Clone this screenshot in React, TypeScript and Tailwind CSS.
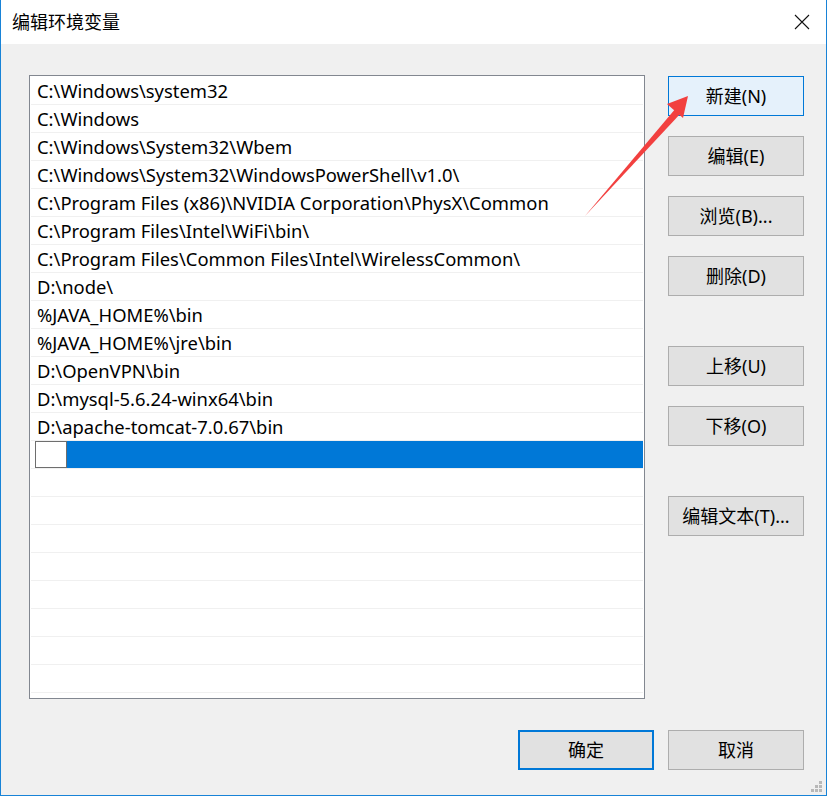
import React from "react";

const paths = [
  "C:\\Windows\\system32",
  "C:\\Windows",
  "C:\\Windows\\System32\\Wbem",
  "C:\\Windows\\System32\\WindowsPowerShell\\v1.0\\",
  "C:\\Program Files (x86)\\NVIDIA Corporation\\PhysX\\Common",
  "C:\\Program Files\\Intel\\WiFi\\bin\\",
  "C:\\Program Files\\Common Files\\Intel\\WirelessCommon\\",
  "D:\\node\\",
  "%JAVA_HOME%\\bin",
  "%JAVA_HOME%\\jre\\bin",
  "D:\\OpenVPN\\bin",
  "D:\\mysql-5.6.24-winx64\\bin",
  "D:\\apache-tomcat-7.0.67\\bin",
];

const font = "font-['Noto_Sans','Noto_Sans_CJK_SC',sans-serif]";

function Btn({
  label,
  className = "",
}: {
  label: string;
  className?: string;
}) {
  return (
    <div
      className={`h-[40px] w-[136px] flex items-center justify-center text-[18px] text-black border border-[#adadad] bg-[#e1e1e1] ${className}`}
    >
      {label}
    </div>
  );
}

export default function App() {
  return (
    <div
      className={`relative w-[827px] h-[796px] bg-[#f0f0f0] border-x border-b border-[#1883d7] ${font} overflow-hidden`}
    >
      {/* title bar */}
      <div className="h-[44px] bg-white flex items-center justify-between pl-[11px] pr-[16px]">
        <span className="text-[18px] text-black leading-none">编辑环境变量</span>
        <svg width="16" height="16" viewBox="0 0 16 16">
          <path d="M1 1 L15 15 M15 1 L1 15" stroke="#111" strokeWidth="1.1" />
        </svg>
      </div>

      <div className="flex pl-[28px] pt-[31px]">
        {/* list */}
        <div className="w-[616px] h-[624px] bg-white border border-[#828790] pt-px px-px overflow-hidden">
          {paths.map((p) => (
            <div
              key={p}
              className="h-[28px] border-b border-[#f0f0f0] flex items-center pl-[6px] pt-[2px] text-[18.4px] text-black leading-none whitespace-nowrap"
            >
              {p}
            </div>
          ))}
          <div className="h-[28px] border-b border-[#f0f0f0] flex pl-[4px]">
            <div className="w-[32px] h-[27px] bg-white border border-[#6e6e6e]" />
            <div className="flex-1 h-[27px] bg-[#0078d7]" />
          </div>
          {Array.from({ length: 9 }).map((_, i) => (
            <div key={i} className="h-[28px] border-b border-[#f0f0f0]" />
          ))}
        </div>

        {/* side buttons */}
        <div className="ml-[23px] pt-px flex flex-col">
          <Btn label="新建(N)" className="!bg-[#e5f1fb] !border-[#0078d7]" />
          <Btn label="编辑(E)" className="mt-[20px]" />
          <Btn label="浏览(B)..." className="mt-[20px]" />
          <Btn label="删除(D)" className="mt-[20px]" />
          <Btn label="上移(U)" className="mt-[50px]" />
          <Btn label="下移(O)" className="mt-[20px]" />
          <Btn label="编辑文本(T)..." className="mt-[50px]" />
        </div>
      </div>

      {/* bottom buttons */}
      <div className="flex justify-end gap-[14px] pr-[22px] mt-[31px]">
        <Btn label="确定" className="!border-2 !border-[#0078d7]" />
        <Btn label="取消" />
      </div>

      {/* resize grip */}
      <svg width="12" height="12" viewBox="0 0 12 12" className="absolute right-[3px] bottom-[2px]">
        <rect x="8" y="0" width="3" height="3" fill="#b8b8b8" />
        <rect x="4" y="4" width="3" height="3" fill="#b8b8b8" />
        <rect x="8" y="4" width="3" height="3" fill="#b8b8b8" />
        <rect x="0" y="8" width="3" height="3" fill="#b8b8b8" />
        <rect x="4" y="8" width="3" height="3" fill="#b8b8b8" />
        <rect x="8" y="8" width="3" height="3" fill="#b8b8b8" />
      </svg>

      {/* red annotation arrow */}
      <svg width="827" height="796" className="absolute left-0 top-0 pointer-events-none">
        <path d="M584 216 L675 108 L680 113 Z" fill="#f2403f" />
        <path d="M687 96 L666 104 L682 118 Z" fill="#f2403f" />
      </svg>
    </div>
  );
}
